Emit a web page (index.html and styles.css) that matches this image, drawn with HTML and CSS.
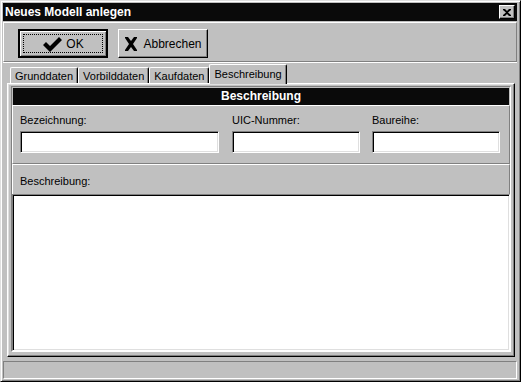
FILE: index.html
```html
<!DOCTYPE html>
<html lang="de">
<head>
  <meta charset="UTF-8">
  <title>Neues Modell anlegen</title>
  <link rel="stylesheet" href="styles.css">
</head>
<body>
  <div class="window">
    <div class="titlebar">
      <span class="title">Neues Modell anlegen</span>
      <button class="close-btn">
        <svg width="8" height="7" viewBox="0 0 8 7"><path d="M0 0h2l2 2 2-2h2v1L5 3.5 8 6v1H6L4 5 2 7H0V6l3-2.5L0 1z" fill="#000"/></svg>
      </button>
    </div>

    <div class="toolbar">
      <button class="btn btn-default">
        <span class="focus">
          <svg width="20" height="16" viewBox="0 0 20 16"><path d="M1 9l3-3 4 4L17 1l3 3L8 16z" fill="#000"/></svg>
          <span>OK</span>
        </span>
      </button>
      <button class="btn">
        <svg width="14" height="14" viewBox="0 0 14 14"><path d="M1 0h3l3 4 3-4h3v1L9 7l4 6v1h-3L7 10l-3 4H1v-1l4-6-4-6z" fill="#000"/></svg>
        <span>Abbrechen</span>
      </button>
    </div>

    <div class="tabs">
      <div class="tab">Grunddaten</div>
      <div class="tab">Vorbilddaten</div>
      <div class="tab">Kaufdaten</div>
      <div class="tab active">Beschreibung</div>
    </div>

    <div class="tabpage">
      <div class="frame">
        <div class="caption">Beschreibung</div>
        <div class="fields">
          <div class="field f-bez">
            <label>Bezeichnung:</label>
            <div class="input"></div>
          </div>
          <div class="field f-uic">
            <label>UIC-Nummer:</label>
            <div class="input"></div>
          </div>
          <div class="field f-br">
            <label>Baureihe:</label>
            <div class="input"></div>
          </div>
        </div>
        <div class="memo-label">Beschreibung:</div>
        <div class="memo"></div>
      </div>
    </div>

    <div class="statusbar"></div>
  </div>
</body>
</html>
```

FILE: styles.css
```css
body {
  margin: 0;
  background-color: #c0c0c0;
  font-family: "Liberation Sans", Arial, sans-serif;
  font-size: 11px;
  color: #000;
}

.window {
  width: 521px;
  height: 382px;
  box-sizing: border-box;
  border: 1px solid;
  border-color: #dfdfdf #000 #000 #dfdfdf;
  box-shadow: inset 1px 1px #fff, inset -1px -1px #808080;
  padding: 2px 3px 2px 2px;
  display: flex;
  flex-direction: column;
  background-color: #c0c0c0;
}

.titlebar {
  height: 18px;
  background-color: #0a0a0a;
  color: #fff;
  display: flex;
  align-items: center;
  justify-content: space-between;
  padding: 0 2px 0 2px;
}

.title {
  font-weight: bold;
  font-size: 12px;
}

.close-btn {
  width: 16px;
  height: 14px;
  padding: 0;
  background-color: #c0c0c0;
  border: 1px solid;
  border-color: #fff #000 #000 #fff;
  box-shadow: inset -1px -1px #808080;
  display: flex;
  align-items: center;
  justify-content: center;
}

.toolbar {
  margin-top: 1px;
  height: 40px;
  box-sizing: border-box;
  border-top: 1px solid #fff;
  border-left: 1px solid #fff;
  border-right: 1px solid #808080;
  border-bottom: 1px solid #808080;
  box-shadow: 0 1px #fff;
  padding: 6px 0 0 14px;
  display: flex;
  gap: 10px;
  align-items: flex-start;
}

.btn {
  width: 90px;
  height: 29px;
  box-sizing: border-box;
  background-color: #c0c0c0;
  border: 1px solid;
  border-color: #fff #000 #000 #fff;
  box-shadow: inset -1px -1px #808080;
  font-family: "Liberation Sans", Arial, sans-serif;
  font-size: 12px;
  color: #000;
  display: flex;
  align-items: center;
  justify-content: center;
  gap: 5px;
  padding: 0;
}

.btn-default {
  border: 2px solid #000;
  box-shadow: inset 1px 1px #fff, inset -1px -1px #808080;
  padding: 3px;
}

.focus {
  flex: 1;
  align-self: stretch;
  border: 1px dotted #000;
  display: flex;
  align-items: center;
  justify-content: center;
  gap: 4px;
}

.tabs {
  margin-top: 2px;
  height: 19px;
  padding-left: 7px;
  display: flex;
  align-items: flex-end;
}

.tab {
  height: 16px;
  box-sizing: border-box;
  padding: 1px 4px 0 4px;
  border: 1px solid;
  border-bottom: none;
  border-color: #fff #000 #000 #fff;
  border-radius: 2px 2px 0 0;
  box-shadow: inset -1px 0 #808080;
  line-height: 14px;
}

.tab.active {
  height: 20px;
  margin-bottom: -1px;
  padding-top: 2px;
  position: relative;
  z-index: 1;
  background-color: #c0c0c0;
}

.tabpage {
  flex: 1;
  margin: 0 2px 4px 4px;
  border: 1px solid;
  border-color: #fff #000 #000 #fff;
  box-shadow: inset -1px -1px #808080, inset 1px 1px #dfdfdf;
  padding: 2px 3px 4px 3px;
  display: flex;
  flex-direction: column;
}

.frame {
  flex: 1;
  border: 1px solid;
  border-color: #808080 #fff #fff #808080;
  display: flex;
  flex-direction: column;
}

.caption {
  height: 17px;
  margin: 1px 1px 0 1px;
  background-color: #0a0a0a;
  color: #fff;
  font-weight: bold;
  font-size: 12px;
  text-align: center;
  line-height: 17px;
}

.fields {
  height: 59px;
  border-top: 1px solid #fff;
  border-bottom: 1px solid #808080;
  border-left: 1px solid #fff;
  border-right: 1px solid #808080;
  display: flex;
  padding: 8px 0 0 7px;
  box-sizing: border-box;
}

.field {
  display: flex;
  flex-direction: column;
  gap: 4px;
}

.field label {
  height: 13px;
  line-height: 13px;
  font-size: 11px;
}

.f-bez { width: 199px; }
.f-uic { width: 128px; margin-left: 13px; }
.f-br { width: 128px; margin-left: 12px; }

.input {
  height: 22px;
  box-sizing: border-box;
  background-color: #fff;
  border: 1px solid;
  border-color: #808080 #fff #fff #808080;
  box-shadow: inset 1px 1px #000, inset -1px -1px #dfdfdf;
}

.memo-label {
  height: 30px;
  box-sizing: border-box;
  border-top: 1px solid #fff;
  border-left: 1px solid #fff;
  border-right: 1px solid #808080;
  padding: 10px 0 0 7px;
  font-size: 11px;
}

.memo {
  flex: 1;
  background-color: #fff;
  border: 1px solid;
  border-color: #808080 #fff #fff #808080;
  box-shadow: inset 1px 1px #000, inset -1px -1px #dfdfdf;
}

.statusbar {
  height: 18px;
  box-sizing: border-box;
  border: 1px solid;
  border-color: #808080 #fff #fff #808080;
}
```
